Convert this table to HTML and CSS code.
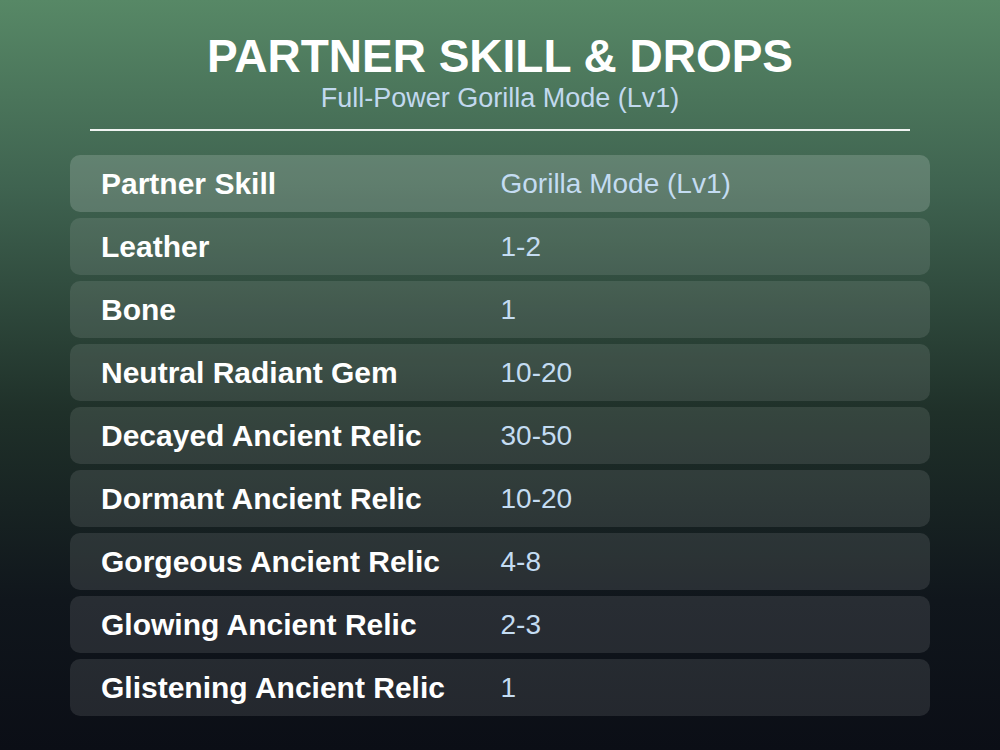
FILE: index.html
```html
<!DOCTYPE html>
<html>
<head>
<meta charset="utf-8">
<link rel="stylesheet" href="styles.css">
</head>
<body>
<div class="page">
  <header class="head">
    <h1 class="title">PARTNER SKILL &amp; DROPS</h1>
    <div class="subtitle">Full-Power Gorilla Mode (Lv1)</div>
  </header>
  <div class="rule"></div>
  <div class="list">
    <div class="row first"><span class="label">Partner Skill</span><span class="value">Gorilla Mode (Lv1)</span></div>
    <div class="row"><span class="label">Leather</span><span class="value">1-2</span></div>
    <div class="row"><span class="label">Bone</span><span class="value">1</span></div>
    <div class="row"><span class="label">Neutral Radiant Gem</span><span class="value">10-20</span></div>
    <div class="row"><span class="label">Decayed Ancient Relic</span><span class="value">30-50</span></div>
    <div class="row"><span class="label">Dormant Ancient Relic</span><span class="value">10-20</span></div>
    <div class="row"><span class="label">Gorgeous Ancient Relic</span><span class="value">4-8</span></div>
    <div class="row"><span class="label">Glowing Ancient Relic</span><span class="value">2-3</span></div>
    <div class="row"><span class="label">Glistening Ancient Relic</span><span class="value">1</span></div>
  </div>
</div>
</body>
</html>
```
FILE: styles.css
```css
html, body {
  margin: 0;
  padding: 0;
}
body {
  width: 1000px;
  height: 750px;
  overflow: hidden;
  font-family: "Liberation Sans", Arial, sans-serif;
  background: linear-gradient(180deg, #578866 0%, #3f6350 25%, #1f3029 55%, #10161c 80%, #0b0e16 100%);
  color: #ffffff;
}
.page {
  padding: 29px 70px 0;
}
.head {
  text-align: center;
}
.title {
  margin: 0;
  font-size: 46px;
  line-height: 54px;
  font-weight: bold;
  color: #ffffff;
}
.subtitle {
  font-size: 27px;
  line-height: 30px;
  color: #c2d9ef;
}
.rule {
  height: 2px;
  background: #f0f4f2;
  margin: 16px 20px 24px;
}
.list {
  display: flex;
  flex-direction: column;
  gap: 6px;
}
.row {
  display: grid;
  grid-template-columns: 1fr 1fr;
  align-items: center;
  height: 57px;
  padding: 0 30px 0 31px;
  border-radius: 10px;
  background: rgba(255, 255, 255, 0.1);
  font-size: 30px;
}
.row.first {
  background: rgba(255, 255, 255, 0.17);
}
.label {
  font-weight: bold;
  color: #ffffff;
}
.value {
  font-size: 28px;
  color: #c4dcf2;
}
```
